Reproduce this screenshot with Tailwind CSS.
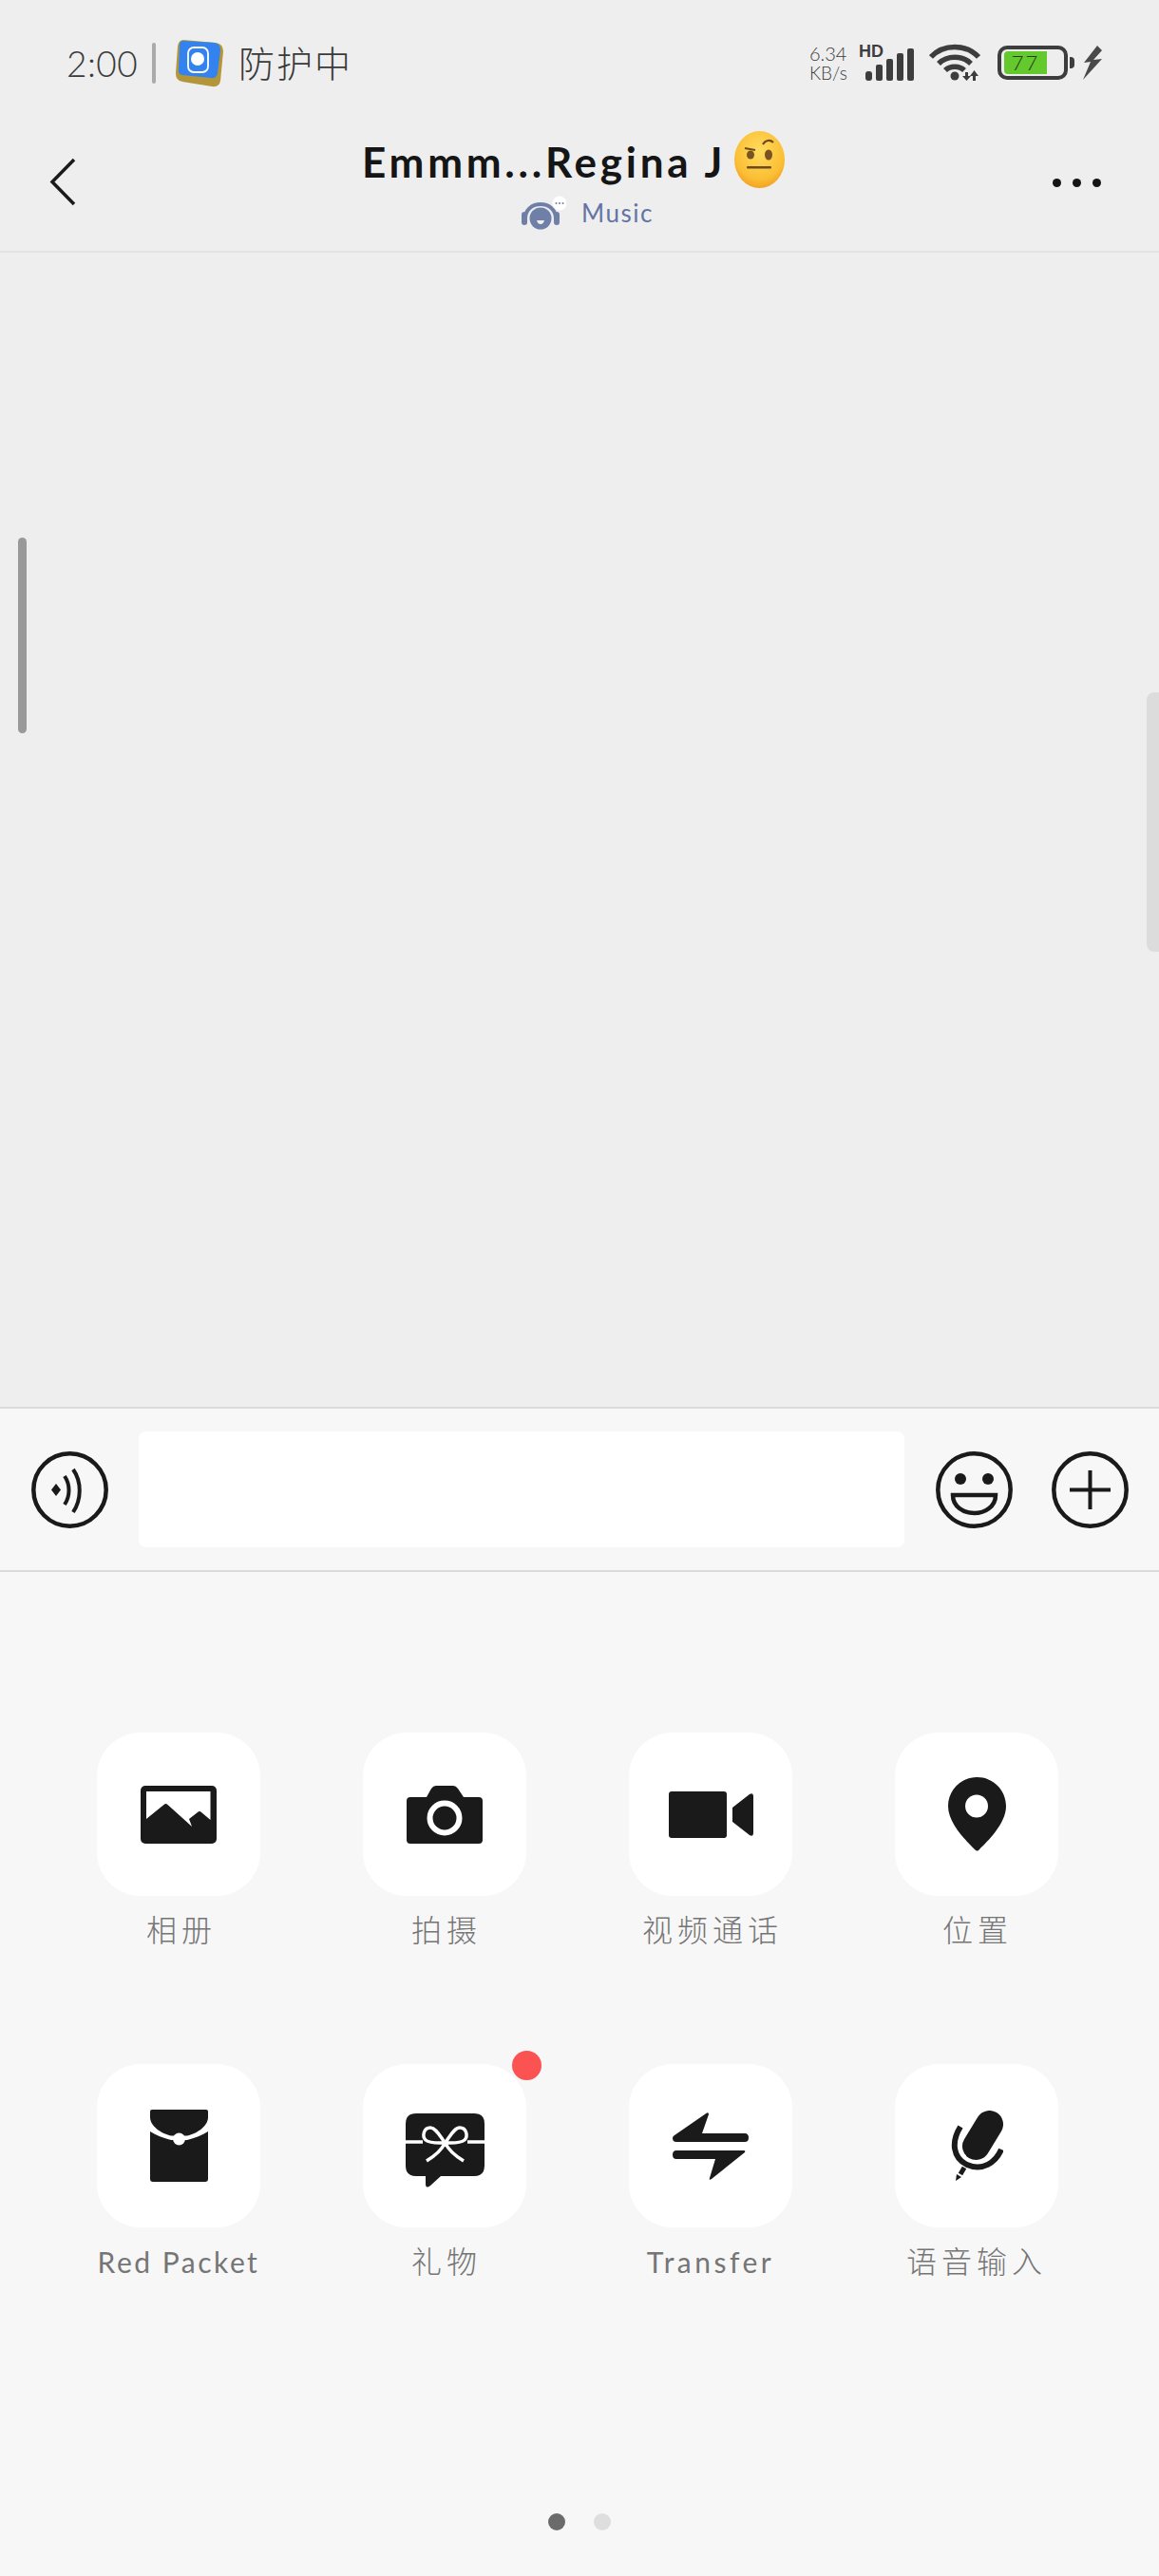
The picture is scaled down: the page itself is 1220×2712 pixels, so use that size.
<!DOCTYPE html>
<html lang="zh">
<head>
    <meta charset="UTF-8">
    <meta name="viewport" content="width=device-width, initial-scale=1.0">
    <title>Chat</title>
    <script src="https://cdn.jsdelivr.net/npm/@tailwindcss/browser@4"></script>
</head>

<body>
<div class="relative w-[1220px] h-[2712px] overflow-hidden flex flex-col bg-[#eeeeee] font-['Lato','Noto_Sans_CJK_SC',sans-serif]">

    <!-- status bar -->
    <div class="h-[132px] shrink-0 flex items-center pl-[70px] pr-[59px] text-[#3a3a3a]">
        <span class="w-[77px] text-[37px] leading-none font-light tracking-[0.5px] whitespace-nowrap">2:00</span>
        <span class="ml-[13px] w-[4px] h-[43px] rounded-sm bg-[#aaaaaa]"></span>
        <svg class="ml-[21px] w-[50px] h-[51px]" viewBox="0 0 50 51">
            <path d="M8 1 L42 4 Q50 5 50 13 L47 44 Q46 51 38 50 L7 45 Q0 44 0 36 L2 8 Q3 1 8 1Z" fill="#b3953a"/>
            <path d="M8 2 L41 4 Q47 5 47 12 L44 36 Q43 42 37 41 L7 38 Q2 37 3 31 L4 7 Q4 2 8 2Z" fill="#3282f0"/>
            <rect x="13" y="9" width="21" height="26" rx="6" fill="none" stroke="#ffffff" stroke-width="1.8"/>
            <circle cx="23" cy="21" r="7" fill="#ffffff"/>
        </svg>
        <span class="ml-[16px] text-[38px] leading-none font-light tracking-[2px] whitespace-nowrap">防护中</span>

        <div class="ml-auto w-[44px] flex flex-col items-start leading-none">
            <span class="text-[20px] font-light leading-[22px] whitespace-nowrap">6.34</span>
            <span class="text-[19px] font-light leading-[20px] whitespace-nowrap">KB/s</span>
        </div>
        <div class="relative ml-[9px] w-[58px] h-[40px]">
            <span class="absolute left-[-1px] top-[-1px] font-['Liberation_Sans'] font-bold text-[18px] leading-[18px] text-[#3d3d3d]">HD</span>
            <svg class="w-[58px] h-[40px]" viewBox="0 0 58 40">
                <g fill="#3d3d3d">
                    <rect x="6" y="29" width="7" height="10" rx="3"/>
                    <rect x="17" y="22" width="7" height="17" rx="2"/>
                    <rect x="28" y="16" width="7" height="23" rx="2"/>
                    <rect x="39" y="10" width="7" height="29" rx="2"/>
                    <rect x="50" y="5" width="7" height="34" rx="2"/>
                </g>
            </svg>
        </div>
        <svg class="ml-[15px] w-[54px] h-[40px]" viewBox="0 0 54 40">
            <g fill="none" stroke="#3d3d3d" stroke-width="5.5">
                <path d="M2 14 C15 0 39 0 52 14"/>
                <path d="M10 21 C19 12 35 12 44 21"/>
                <path d="M17 28 C22 23 32 23 37 28"/>
            </g>
            <circle cx="27" cy="34" r="4.5" fill="#3d3d3d"/>
            <path d="M38 30 h3 v4 h3 l-4.500 5 l-4.500 -5 h3z M46 39 h3 v-5 h3 l-4.500 -6 l-4.500 6 h3z" fill="#3d3d3d"/>
        </svg>
        <div class="ml-[18px] relative w-[74px] h-[36px] rounded-[10px] border-[4px] border-[#3d3d3d] pl-[3px] pt-[2px]">
            <div class="w-[45px] h-[24px] rounded-l-[4px] bg-[#63c92d] flex items-center justify-center text-[22px] leading-none text-[#2b3a20] font-light tracking-[2px]">77</div>
        </div>
        <span class="ml-[2px] w-[5px] h-[12px] rounded-r-sm bg-[#3d3d3d]"></span>
        <svg class="ml-[8px] w-[22px] h-[36px]" viewBox="0 0 22 36">
            <path d="M16 0 L2 18 L9 17 L1 36 L21 14 L12 15 L21 5Z" fill="#4a4a4a"/>
        </svg>
    </div>

    <!-- title bar -->
    <div class="h-[134px] shrink-0 relative flex items-start border-b-[2px] border-[#e3e3e3]">
        <svg class="ml-[52px] mt-[34px] w-[28px] h-[51px]" viewBox="0 0 28 51">
            <path d="M26 2 L3 25.500 L26 49" fill="none" stroke="#1a1a1a" stroke-width="3.500"/>
        </svg>
        <div class="ml-[301px] w-[445px] flex flex-col">
            <div class="h-[76px] flex items-center">
                <span class="w-[381px] text-[44px] leading-none font-bold text-[#151515] tracking-[3.75px] whitespace-nowrap">Emmm...Regina J</span>
                <svg class="ml-[11px] mt-[-4px] w-[53px] h-[60px]" viewBox="0 0 53 60">
                    <defs>
                        <radialGradient id="face" cx="50%" cy="35%" r="70%">
                            <stop offset="0%" stop-color="#ffdc5e"/>
                            <stop offset="70%" stop-color="#fbbf35"/>
                            <stop offset="100%" stop-color="#f09a1f"/>
                        </radialGradient>
                    </defs>
                    <ellipse cx="26.500" cy="30" rx="26.500" ry="30" fill="url(#face)"/>
                    <ellipse cx="17" cy="25" rx="4" ry="4.500" fill="#7a5320"/>
                    <ellipse cx="36" cy="25" rx="4" ry="5.500" fill="#7a5320"/>
                    <path d="M11 18 L22 20 M30 14 C33 9 38 9 41 12" fill="none" stroke="#6b4a1e" stroke-width="2.200"/>
                    <rect x="13" y="37" width="26" height="2.500" rx="1" fill="#6b4a1e"/>
                </svg>
            </div>
            <div class="pl-[168px] mt-[-2px] flex items-center">
                <svg class="w-[48px] h-[36px]" viewBox="0 0 48 36">
                    <path d="M4 24 C4 4 36 4 36 24" fill="none" stroke="#6f7fa8" stroke-width="4"/>
                    <rect x="0" y="17" width="6" height="14" rx="3" fill="#6f7fa8"/>
                    <rect x="34" y="17" width="6" height="14" rx="3" fill="#6f7fa8"/>
                    <circle cx="20" cy="24" r="11.500" fill="#6f7fa8"/>
                    <path d="M16 26 H24 Q23 30 20 30 Q17 30 16 26Z" fill="#eeeeee"/>
                    <circle cx="40" cy="8" r="7.500" fill="#ffffff"/>
                    <g fill="#6f7fa8"><circle cx="36.500" cy="8" r="1"/><circle cx="40" cy="8" r="1"/><circle cx="43.500" cy="8" r="1"/></g>
                </svg>
                <span class="ml-[15px] text-[26px] leading-none font-normal text-[#6474a5] tracking-[1.5px]">Music</span>
            </div>
        </div>
        <div class="ml-auto mr-[61px] mt-[56px] flex gap-[12px]">
            <span class="size-[9px] rounded-full bg-[#151515]"></span>
            <span class="size-[9px] rounded-full bg-[#151515]"></span>
            <span class="size-[9px] rounded-full bg-[#151515]"></span>
        </div>
    </div>

    <!-- empty chat area -->
    <div class="h-[1215px] shrink-0"></div>

    <!-- input row -->
    <div class="h-[174px] shrink-0 flex items-center pl-[33px] bg-[#f7f7f7] border-y-[2px] border-[#dadada]">
        <svg class="w-[81px] h-[81px]" viewBox="0 0 81 81" fill="none" stroke="#1a1a1a">
            <circle cx="40.500" cy="40.500" r="38.200" stroke-width="4.500"/>
            <path d="M26 34 L21 40.500 L26 47 L31 40.500Z" fill="#1a1a1a" stroke="none"/>
            <path d="M35 26 C41 35 41 47 35 56" stroke-width="4"/>
            <path d="M44 19 C53 32 53 50 44 64" stroke-width="4"/>
        </svg>
        <div class="ml-[32px] w-[806px] h-[122px] rounded-[8px] bg-white"></div>
        <svg class="ml-[33px] w-[81px] h-[81px]" viewBox="0 0 81 81" fill="none" stroke="#1a1a1a">
            <circle cx="40.500" cy="40.500" r="38.200" stroke-width="4.500"/>
            <circle cx="26" cy="29" r="6" fill="#1a1a1a" stroke="none"/>
            <circle cx="55" cy="29" r="6" fill="#1a1a1a" stroke="none"/>
            <path d="M18 46 H63 C63 58 52 65 40.500 65 C29 65 18 58 18 46Z" stroke-width="4.500"/>
        </svg>
        <svg class="ml-[41px] w-[81px] h-[81px]" viewBox="0 0 81 81" fill="none" stroke="#1a1a1a">
            <circle cx="40.500" cy="40.500" r="38.200" stroke-width="4.500"/>
            <path d="M19 40.500 H62 M40.500 20 V61" stroke-width="4"/>
        </svg>
    </div>

    <!-- attachment panel -->
    <div class="flex-1 bg-[#f7f7f7] pt-[169px] text-[#757575]">
        <div class="pl-[48px] pr-[52px] grid grid-cols-4 gap-y-[121px]">

            <div class="flex flex-col items-center">
                <div class="size-[172px] rounded-[46px] bg-white flex items-center justify-center">
                    <svg class="w-[80px] h-[61px]" viewBox="0 0 80 61">
                        <rect width="80" height="61" rx="5" fill="#1a1a1a"/>
                        <path d="M6 6 H73.500 V36 L64 28 Q62 26 60 28 L51 35 L54 43 L28.500 20 Q26.500 18 24.500 20 L6 35Z" fill="#ffffff"/>
                    </svg>
                </div>
                <span class="mt-[16px] pl-[6px] h-[40px] text-[32px] leading-[40px] font-light tracking-[5px] whitespace-nowrap">相册</span>
            </div>

            <div class="flex flex-col items-center">
                <div class="size-[172px] rounded-[46px] bg-white flex items-center justify-center">
                    <svg class="w-[80px] h-[61px]" viewBox="0 0 80 61">
                        <path d="M4 12 H21 L26 3 Q28 0 31 0 H49 Q52 0 54 3 L60 12 H76 Q80 12 80 16 V57 Q80 61 76 61 H4 Q0 61 0 57 V16 Q0 12 4 12Z" fill="#1a1a1a"/>
                        <circle cx="40" cy="34" r="15.500" fill="none" stroke="#ffffff" stroke-width="6"/>
                    </svg>
                </div>
                <span class="mt-[16px] pl-[4px] h-[40px] text-[32px] leading-[40px] font-light tracking-[5px] whitespace-nowrap">拍摄</span>
            </div>

            <div class="flex flex-col items-center">
                <div class="size-[172px] rounded-[46px] bg-white flex items-center justify-center">
                    <svg class="w-[89px] h-[49px]" viewBox="0 0 89 49">
                        <rect width="61" height="49" rx="3" fill="#1a1a1a"/>
                        <path d="M67 17 L85 3 Q89 1 89 5 V44 Q89 48 85 46 L67 32Z" fill="#1a1a1a"/>
                    </svg>
                </div>
                <span class="mt-[16px] pl-[4px] h-[40px] text-[32px] leading-[40px] font-light tracking-[5px] whitespace-nowrap">视频通话</span>
            </div>

            <div class="flex flex-col items-center">
                <div class="size-[172px] rounded-[46px] bg-white flex items-center justify-center">
                    <svg class="w-[61px] h-[78px]" viewBox="0 0 61 78">
                        <path d="M30.500 0 C13.600 0 0 13.600 0 30.500 C0 49 20 68 28 76 Q30.500 79 33 76 C41 68 61 49 61 30.500 C61 13.600 47.400 0 30.500 0Z" fill="#1a1a1a"/>
                        <circle cx="30" cy="30.500" r="12" fill="#ffffff"/>
                    </svg>
                </div>
                <span class="mt-[16px] pl-[2px] h-[40px] text-[32px] leading-[40px] font-light tracking-[5px] whitespace-nowrap">位置</span>
            </div>

            <div class="flex flex-col items-center">
                <div class="size-[172px] rounded-[46px] bg-white flex items-center justify-center">
                    <svg class="w-[61px] h-[76px]" viewBox="0 0 61 76">
                        <path d="M0 2 Q0 0 2 0 H59 Q61 0 61 2 V8 C61 17 50 25 39 27.500 L22 27.500 C11 25 0 17 0 8Z" fill="#1a1a1a"/>
                        <path d="M0 23 C6 27 14 30 22 32 L39 32 C47 30 55 27 61 23 V73 Q61 76 58 76 H3 Q0 76 0 73Z" fill="#1a1a1a"/>
                        <circle cx="30.500" cy="31" r="6.500" fill="#ffffff"/>
                    </svg>
                </div>
                <span class="mt-[16px] h-[40px] text-[30px] leading-[40px] font-normal tracking-[2.5px] whitespace-nowrap">Red Packet</span>
            </div>

            <div class="flex flex-col items-center">
                <div class="relative size-[172px] rounded-[46px] bg-white flex items-center justify-center">
                    <svg class="w-[83px] h-[78px] mt-[10px]" viewBox="0 0 83 78">
                        <path d="M11 0 H72 Q83 0 83 11 V55 Q83 66 72 66 H37 L26 76 Q21 80 21 74 V66 H11 Q0 66 0 55 V11 Q0 0 11 0Z" fill="#1a1a1a"/>
                        <g fill="none" stroke="#ffffff" stroke-width="3.500">
                            <path d="M0 30 H18 M65 30 H83"/>
                            <path d="M22 50 C32 44 38 38 41.500 31 C36 24 32 15 26 15 C19 15 17 24 21 28 C26 32 34 31 41.500 31 C49 31 57 32 62 28 C66 24 64 15 57 15 C51 15 47 24 41.500 31 C45 38 51 44 61 50"/>
                        </g>
                    </svg>
                    <span class="absolute top-[-14px] right-[-16px] size-[31px] rounded-full bg-[#fb5252]"></span>
                </div>
                <span class="mt-[16px] pl-[4px] h-[40px] text-[32px] leading-[40px] font-light tracking-[5px] whitespace-nowrap">礼物</span>
            </div>

            <div class="flex flex-col items-center">
                <div class="size-[172px] rounded-[46px] bg-white flex items-center justify-center">
                    <svg class="w-[80px] h-[71px]" viewBox="0 0 80 71">
                        <path d="M2 24 L36 0.500 Q38 -0.500 38 2 L31 22 H76 Q80 22 80 26.500 Q80 31 76 31 H4 Q0 31 0 27 Q0 25 2 24Z" fill="#1a1a1a"/>
                        <path d="M4 40 H75 Q77 40 76 42 L41 70 Q38 72 39 69 L45 49 H4 Q0 49 0 44.500 Q0 40 4 40Z" fill="#1a1a1a"/>
                    </svg>
                </div>
                <span class="mt-[16px] h-[40px] text-[30px] leading-[40px] font-normal tracking-[3.5px] whitespace-nowrap">Transfer</span>
            </div>

            <div class="flex flex-col items-center">
                <div class="size-[172px] rounded-[46px] bg-white flex items-center justify-center">
                    <svg class="w-[55px] h-[74px]" viewBox="0 0 55 74">
                        <path d="M40.500 14.500 L26.500 37.500" stroke="#1a1a1a" stroke-width="29" stroke-linecap="round" fill="none"/>
                        <path d="M10 17 C0 33 2 50 17 57 C33 64 47 55 53 41" fill="none" stroke="#1a1a1a" stroke-width="6"/>
                        <path d="M14 60 L10 67" stroke="#1a1a1a" stroke-width="5" fill="none"/>
                        <path d="M5 74 L6 67 L11 70Z" fill="#1a1a1a"/>
                    </svg>
                </div>
                <span class="mt-[16px] h-[40px] text-[32px] leading-[40px] font-light tracking-[5px] whitespace-nowrap">语音输入</span>
            </div>
        </div>

        <div class="mt-[245px] flex justify-center gap-[30px]">
            <span class="size-[18px] rounded-full bg-[#6b6b6b]"></span>
            <span class="size-[18px] rounded-full bg-[#dedede]"></span>
        </div>
    </div>

    <!-- overlays: scroll thumb and side handle -->
    <div class="absolute left-[19px] top-[566px] w-[9px] h-[206px] rounded-full bg-[#999999]"></div>
    <div class="absolute right-0 top-[729px] w-[13px] h-[273px] rounded-l-[8px] bg-[#dcdcdc] blur-[0.5px]"></div>
</div>
</body>
</html>
